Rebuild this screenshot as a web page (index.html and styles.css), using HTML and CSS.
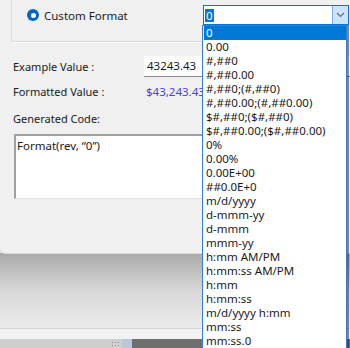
FILE: index.html
```html
<!DOCTYPE html>
<html>
<head>
<meta charset="utf-8">
<link rel="stylesheet" href="styles.css">
</head>
<body>
<div class="screen">
  <div class="dialog">
    <div class="group">
      <div class="radio-row">
        <span class="radio"><span class="radio-dot"></span></span>
        <span class="radio-label">Custom Format</span>
        <div class="combo">
          <div class="combo-field"><span class="combo-sel">0</span></div>
          <div class="combo-btn">
            <svg width="9" height="6" viewBox="0 0 9 6"><path d="M1 1 L4.5 4.5 L8 1" fill="none" stroke="#5f6a78" stroke-width="1.2"/></svg>
          </div>
          <ul class="list">
            <li class="item active">0</li>
            <li class="item">0.00</li>
            <li class="item">#,##0</li>
            <li class="item">#,##0.00</li>
            <li class="item">#,##0;(#,##0)</li>
            <li class="item">#,##0.00;(#,##0.00)</li>
            <li class="item">$#,##0;($#,##0)</li>
            <li class="item">$#,##0.00;($#,##0.00)</li>
            <li class="item">0%</li>
            <li class="item">0.00%</li>
            <li class="item">0.00E+00</li>
            <li class="item">##0.0E+0</li>
            <li class="item">m/d/yyyy</li>
            <li class="item">d-mmm-yy</li>
            <li class="item">d-mmm</li>
            <li class="item">mmm-yy</li>
            <li class="item">h:mm AM/PM</li>
            <li class="item">h:mm:ss AM/PM</li>
            <li class="item">h:mm</li>
            <li class="item">h:mm:ss</li>
            <li class="item">m/d/yyyy h:mm</li>
            <li class="item">mm:ss</li>
            <li class="item">mm:ss.0</li>
          </ul>
        </div>
      </div>
    </div>
    <div class="form">
      <div class="row row-example">
        <span class="label">Example Value :</span>
        <div class="textbox">43243.43</div>
      </div>
      <div class="row row-formatted">
        <span class="label">Formatted Value :</span>
        <span class="value-blue">$43,243.43</span>
      </div>
      <div class="code-label">Generated Code:</div>
      <div class="code-box">Format(rev, “0”)</div>
    </div>
  </div>
  <div class="backdrop">
    <div class="shade"></div>
    <div class="band"></div>
    <div class="strip">
      <div class="strip-a"><span class="grip"></span></div>
      <div class="strip-b"></div>
      <div class="strip-c"></div>
    </div>
  </div>
</div>
</body>
</html>
```

FILE: styles.css
```css
html, body {
  margin: 0;
  padding: 0;
}
body {
  width: 350px;
  height: 348px;
  overflow: hidden;
  font-family: "Noto Sans", "DejaVu Sans", sans-serif;
  font-size: 11px;
  color: #1a1a1a;
  background: #e8e8e8;
}
.screen {
  width: 350px;
  height: 348px;
  display: flex;
  flex-direction: column;
}
.dialog {
  height: 253px;
  background: #f0f0f0;
  border-bottom-left-radius: 5px;
  box-shadow: 0 1px 0 #dadada;
  position: relative;
  z-index: 1;
}
.group {
  margin-left: 11px;
  height: 42px;
  border-left: 1px solid #dcdcdc;
  border-bottom: 1px solid #dcdcdc;
  box-sizing: border-box;
  box-shadow: 0 1px 0 #ffffff;
}
.radio-row {
  display: flex;
  align-items: center;
  padding-top: 5px;
  height: 20px;
}
.radio {
  width: 12px;
  height: 12px;
  margin-left: 15px;
  border-radius: 50%;
  background: #0067c0;
  display: flex;
  align-items: center;
  justify-content: center;
}
.radio-dot {
  width: 5px;
  height: 5px;
  border-radius: 50%;
  background: #ffffff;
}
.radio-label {
  margin-left: 5px;
  font-size: 11.5px;
}
.combo {
  position: relative;
  margin-left: auto;
  margin-right: 1px;
  width: 146px;
  height: 20px;
  box-sizing: border-box;
  border: 1px solid #0078d7;
  background: #ffffff;
  display: flex;
  z-index: 5;
}
.combo-field {
  flex: 1;
  display: flex;
  align-items: center;
  padding-left: 1px;
}
.combo-sel {
  background: #0078d7;
  color: #ffffff;
  padding: 0 1px;
  line-height: 13px;
  font-size: 11.5px;
}
.combo-btn {
  width: 15px;
  background: #cce4f7;
  border-left: 1px solid #7eb4ea;
  display: flex;
  align-items: center;
  justify-content: center;
}
.list {
  position: absolute;
  left: -2px;
  top: 19px;
  width: 145px;
  margin: 0;
  padding: 0;
  list-style: none;
  background: #ffffff;
  border: 1px solid #2f80d6;
  box-sizing: border-box;
  box-shadow: 2px 0 0 rgba(40, 40, 40, 0.55);
}
.item {
  height: 14px;
  line-height: 14px;
  padding-left: 2px;
  margin: 0 0 0 1px;
  font-size: 11.5px;
  white-space: nowrap;
}
.item.active {
  background: #0078d7;
  color: #ffffff;
  margin-right: 0;
}
.form {
  padding-left: 13px;
}
.row {
  display: grid;
  grid-template-columns: 131px 1fr;
  align-items: center;
}
.row-example {
  margin-top: 14px;
  height: 21px;
}
.textbox {
  background: #ffffff;
  height: 21px;
  line-height: 19px;
  padding-left: 3px;
  box-sizing: border-box;
  border-bottom: 1px solid #8a8a8a;
  font-size: 11.5px;
}
.row-formatted {
  margin-top: 5px;
  height: 18px;
}
.value-blue {
  color: #4c3cf0;
  padding-left: 2px;
  font-size: 11.5px;
}
.code-label {
  margin-top: 11px;
  height: 16px;
  line-height: 16px;
}
.code-box {
  margin-top: 7px;
  margin-left: 1px;
  width: 260px;
  height: 65px;
  box-sizing: border-box;
  background: #ffffff;
  border-top: 2px solid #a0a0a0;
  border-left: 2px solid #a0a0a0;
  border-bottom: 1px solid #e3e3e3;
  padding: 2px 0 0 1px;
  font-size: 11.5px;
  line-height: 15px;
}
.backdrop {
  flex: 1;
  display: flex;
  flex-direction: column;
}
.shade {
  height: 75px;
  background: linear-gradient(#a9a9a9, #d8d8d8 50%, #ebebeb);
  border-bottom: 1px solid #d6d6d6;
}
.band {
  height: 10px;
  background: #f2f2f2;
}
.strip {
  flex: 1;
  display: flex;
}
.strip-a {
  width: 122px;
  background: #cfcfcf;
  display: flex;
  justify-content: flex-end;
  align-items: center;
}
.grip {
  width: 9px;
  height: 6px;
  margin-right: 2px;
  background-image: radial-gradient(circle, #8e8e8e 0.8px, transparent 1px);
  background-size: 3px 3px;
}
.strip-b {
  width: 10px;
  background: #b8c8d8;
}
.strip-c {
  flex: 1;
  background: #6f6f6f;
}
```
